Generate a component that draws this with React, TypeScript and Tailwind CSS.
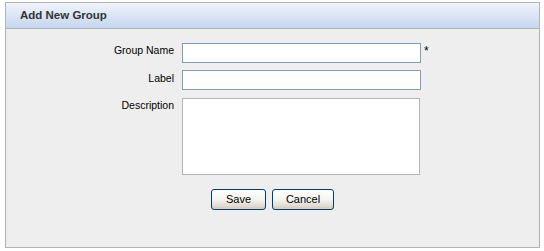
export default function App() {
  const font = { fontFamily: "Tahoma, 'Liberation Sans', Arial, sans-serif" };
  const btn =
    "h-[21px] rounded-[3px] border border-[#003c74] bg-gradient-to-b from-[#ffffff] via-[#f4f4f0] to-[#d6d0c5] text-[11px] text-black shadow-[inset_0_-2px_0_#d6d0c5,inset_0_1px_0_#ffffff] leading-none";
  return (
    <div className="w-[544px] h-[251px] bg-white pt-[2px] pl-[5px] pr-[4px] pb-[3px]" style={font}>
      <div className="h-full border border-[#b3b3b3] bg-[#eeeeee] flex flex-col">
        <div className="h-[26px] border-b border-[#b3b3b3] bg-gradient-to-b from-[#f0f4fc] to-[#c5d6ef] flex items-center pl-[14px]">
          <span className="text-[11.5px] font-bold text-[#333333]">Add New Group</span>
        </div>
        <div className="pt-[13px] flex flex-col">
          <div className="flex items-center">
            <label className="w-[168px] text-right text-[10.5px] text-black pb-[3px]">Group Name</label>
            <input className="ml-[8px] w-[239px] h-[20px] border border-[#7f9db9] bg-white outline-none" />
            <span className="ml-[3px] text-[12px] text-black pb-[3px]">*</span>
          </div>
          <div className="flex items-center mt-[7px]">
            <label className="w-[168px] text-right text-[10.5px] text-black pb-[3px]">Label</label>
            <input className="ml-[8px] w-[239px] h-[20px] border border-[#7f9db9] bg-white outline-none" />
          </div>
          <div className="flex items-start mt-[8px]">
            <label className="w-[168px] text-right text-[10.5px] text-black">Description</label>
            <textarea className="ml-[8px] w-[238px] h-[77px] border border-[#b5b5b5] bg-white outline-none resize-none" />
          </div>
          <div className="flex justify-center gap-[6px] mt-[14px]">
            <button className={btn + " w-[55px]"}>Save</button>
            <button className={btn + " w-[62px]"}>Cancel</button>
          </div>
        </div>
      </div>
    </div>
  );
}
